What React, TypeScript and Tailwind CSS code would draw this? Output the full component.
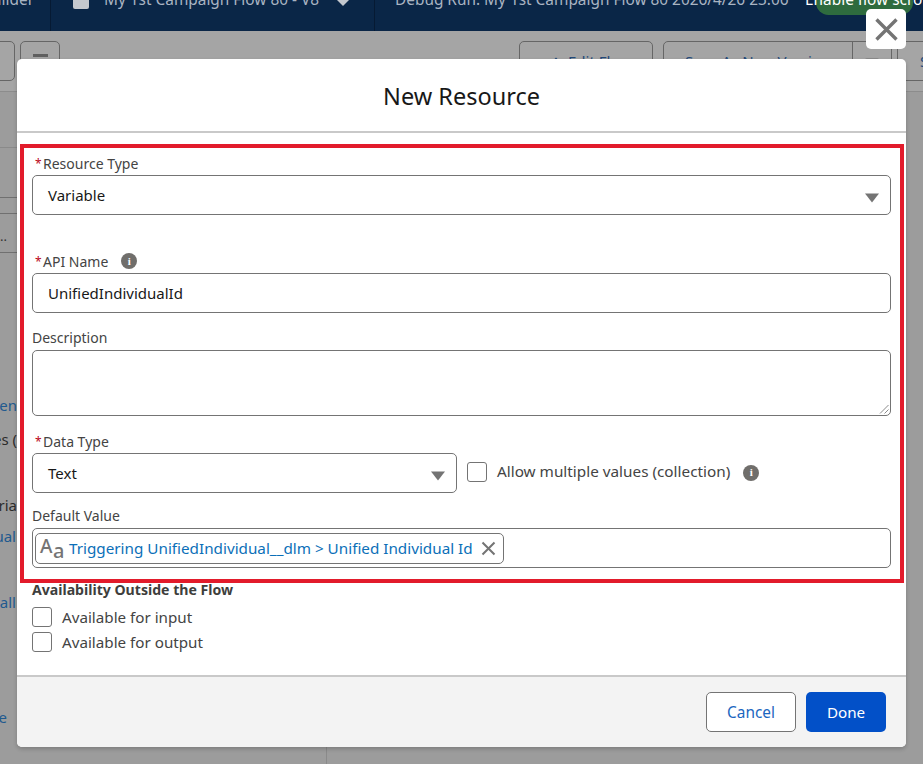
import type { ReactNode } from 'react';

const font = "font-['Noto_Sans','Open_Sans',sans-serif]";

function Label({ text, required = false }: { text: string; required?: boolean }) {
  return (
    <div className="flex h-[20px] items-center pt-[1px] text-[14px] leading-[20px] text-[#444444]">
      {required && <span className="ml-[3px] w-[8px] text-[12px] text-[#ba0517]">*</span>}
      {text}
    </div>
  );
}

function Box({ className = '', children }: { className?: string; children?: ReactNode }) {
  return (
    <div className={`flex items-center rounded-[5px] border border-[#747474] bg-white px-[15px] text-[15px] text-[#181818] ${className}`}>
      {children}
    </div>
  );
}

function Caret() {
  return (
    <svg viewBox="0 0 14 10" className="ml-auto mr-[-4px] mt-[6px] h-[10px] w-[14px]">
      <path d="M0 .5h14L7 9.5z" fill="#747474" />
    </svg>
  );
}

function Check() {
  return <span className="block h-[20px] w-[20px] shrink-0 rounded-[3px] border border-[#747474] bg-white" />;
}

function InfoDot() {
  return (
    <span className="flex h-[16px] w-[16px] items-center justify-center rounded-full bg-[#706e6b] font-['Liberation_Serif',serif] text-[11px] font-bold leading-none text-white">
      i
    </span>
  );
}

function Cross({ className = '' }: { className?: string }) {
  return (
    <svg viewBox="0 0 20 20" className={className} fill="none" stroke="#747474" strokeWidth="2.7">
      <path d="M2 2l16 16M18 2L2 18" />
    </svg>
  );
}

function SideText({ text, className }: { text: string; className: string }) {
  return (
    <div className={`flex h-[20px] justify-end whitespace-nowrap text-[15px] leading-[20px] ${className}`}>
      {text}
    </div>
  );
}

function TopBar() {
  return (
    <div className="flex h-[31px] shrink-0 bg-[#0a2647] text-[15.4px] leading-[20px] text-[#a9b4c2]">
      <div className="flex w-[51px] justify-end border-r border-[#061a33] pr-[16px]">
        <span className="-mt-[10px] whitespace-nowrap">Builder</span>
      </div>
      <div className="flex w-[324px] items-start border-r border-[#061a33] pl-[22px]">
        <span className="mr-[15px] block h-[9px] w-[16px] rounded-b-[2px] bg-[#c4c8ce]" />
        <span className="-mt-[10px] whitespace-nowrap">My 1st Campaign Flow 80 - V8</span>
        <svg viewBox="0 0 12 6" className="ml-[18px] h-[6px] w-[12px]">
          <path d="M0 0h12L6 6z" fill="#c4c8ce" />
        </svg>
      </div>
      <div className="relative flex-1 pl-[20px]">
        <span className="-mt-[10px] block whitespace-nowrap">Debug Run: My 1st Campaign Flow 80 2026/4/26 23:06</span>
        <span className="absolute left-[441px] top-[-10px] h-[25px] w-[97px] rounded-full bg-[#2e6b3e]" />
        <span className="absolute left-[430px] top-[-10px] whitespace-nowrap text-white">Enable flow scroll</span>
      </div>
    </div>
  );
}

function Toolbar() {
  return (
    <div className="flex h-[61px] shrink-0 items-start overflow-hidden border-b border-[#8c8c8c] bg-[#a5a5a5] pt-[10px] text-[15px] leading-[38px] text-[#23497a]">
      <div className="-ml-[20px] h-[40px] w-[35px] shrink-0 rounded-[5px] border border-[#666666]" />
      <div className="ml-[5px] flex h-[40px] w-[40px] shrink-0 justify-center rounded-[5px] border border-[#666666] pt-[12px]">
        <span className="h-[3px] w-[15px] bg-[#5f5f5f]" />
      </div>
      <div className="ml-[459px] flex h-[40px] w-[134px] shrink-0 rounded-[5px] border border-[#666666] pl-[30px]">
        <svg viewBox="0 0 10 10" className="mr-[8px] mt-[14px] h-[10px] w-[10px]">
          <path d="M0 10V7.5L6 1.5 8.5 4 2.5 10z" fill="#23497a" />
        </svg>
        <span className="whitespace-nowrap">Edit Flow</span>
      </div>
      <div className="ml-[10px] flex h-[40px] w-[229px] shrink-0 rounded-[5px] border border-[#666666]">
        <div className="w-[189px] whitespace-nowrap border-r border-[#666666] pl-[21px]">Save As New Version</div>
        <div className="flex flex-1 justify-center pt-[16px]">
          <span className="h-[8px] w-[14px] rounded-[2px] bg-[#8c8c8c]" />
        </div>
      </div>
      <div className="ml-[5px] h-[40px] w-[60px] shrink-0 whitespace-nowrap rounded-[5px] border border-[#666666] pl-[22px]">Save</div>
    </div>
  );
}

function Sidebar() {
  return (
    <div className="w-[327px] shrink-0 border-r border-[#8a8a8a] text-[#333333]">
      <div className="h-[56px] border-b border-[#8a8a8a]" />
      <div className="h-[50px] border-b border-[#707070]" />
      <div className="h-[16px] border-b border-[#707070]" />
      <div className="h-[39px] border-b border-[#707070] pt-[12px] text-[13px] leading-[20px]">..</div>
      <div className="mt-[142px] w-[17px]"><SideText text="Open" className="text-[#215a8f]" /></div>
      <div className="mt-[14px] w-[17px]"><SideText text="Variables (" className="text-[#2c2c2c]" /></div>
      <div className="mt-[46px] w-[17px]"><SideText text="Materia" className="text-[#2c2c2c]" /></div>
      <div className="mt-[11px] w-[16px]"><SideText text="Individual" className="text-[#215a8f]" /></div>
      <div className="mt-[46px] w-[16px]"><SideText text="View all" className="text-[#215a8f]" /></div>
      <div className="mt-[95px] w-[7px]"><SideText text="More" className="text-[#215a8f]" /></div>
    </div>
  );
}

function ResourceForm() {
  return (
    <div className="ml-[3px] w-[884px] border-[4px] border-[#e21b2b] pl-[8px] pr-[9px] pt-[5px]">
      <Label text="Resource Type" required />
      <Box className="mt-[2px] h-[40px]">Variable<Caret /></Box>
      <div className="mt-[36px] flex items-center">
        <Label text="API Name" required />
        <span className="ml-[13px]"><InfoDot /></span>
      </div>
      <Box className="mt-[2px] h-[40px]">UnifiedIndividualId</Box>
      <div className="mt-[14px]"><Label text="Description" /></div>
      <Box className="mt-[3px] h-[66px] !items-end justify-end !px-[1px] pb-[1px]">
        <svg viewBox="0 0 10 10" className="h-[10px] w-[10px]" fill="none" stroke="#8a8a8a" strokeWidth="1">
          <path d="M9.5 1L1 9.5M9.5 5.5L5.5 9.5" />
        </svg>
      </Box>
      <div className="mt-[15px]"><Label text="Data Type" required /></div>
      <div className="mt-[2px] flex items-center">
        <Box className="h-[40px] w-[425px]">Text<Caret /></Box>
        <span className="-mt-[2px] ml-[10px]"><Check /></span>
        <span className="-mt-[3px] ml-[10px] text-[15.3px] text-[#444444]">Allow multiple values (collection)</span>
        <span className="-mt-[1px] ml-[13px]"><InfoDot /></span>
      </div>
      <div className="mt-[12px]"><Label text="Default Value" /></div>
      <Box className="mb-[11px] mt-[3px] h-[40px] !px-[2px]">
        <div className="flex h-[31px] items-center rounded-[5px] border border-[#747474] pl-[3px] pr-[7px] text-[15.25px] text-[#0b6fb8]">
          <span className="relative mr-[7px] h-[24px] w-[23px] text-[#747474]">
            <span className="absolute left-[1px] top-[-2px] text-[19px] font-medium leading-[24px]">A</span>
            <span className="absolute left-[14px] top-[3px] text-[20px] font-medium leading-[24px]">a</span>
          </span>
          Triggering UnifiedIndividual__dlm &gt; Unified Individual Id
          <Cross className="ml-[8px] h-[15px] w-[15px]" />
        </div>
      </Box>
    </div>
  );
}

export default function App() {
  return (
    <div className={`relative h-[764px] w-[923px] overflow-hidden ${font}`}>
      <div className="flex h-full flex-col bg-[#9c9c9c]">
        <TopBar />
        <Toolbar />
        <div className="flex flex-1"><Sidebar /></div>
      </div>

      {/* dialog */}
      <div className="absolute left-[17px] top-[59px] flex h-[688px] w-[889px] flex-col overflow-hidden rounded-[5px] bg-white shadow-[0_2px_4px_rgba(0,0,0,0.2)]">
        <div className="flex h-[72px] shrink-0 items-center justify-center pt-[3px] text-[23.5px] text-[#181818]">
          New Resource
        </div>
        <div className="h-[2px] shrink-0 bg-[#c9c9c9]" />
        <div className="flex-1 pt-[11px]">
          <ResourceForm />
          <div className="px-[15px]">
            <div className="-mt-[3px] text-[14.1px] font-bold leading-[20px] text-[#3e3e3c]">Availability Outside the Flow</div>
            <div className="mt-[7px] flex h-[20px] items-center gap-[10px] text-[15.2px] text-[#444444]"><Check /><span className="mt-[1px]">Available for input</span></div>
            <div className="mt-[5px] flex h-[20px] items-center gap-[10px] text-[15.2px] text-[#444444]"><Check /><span className="mt-[1px]">Available for output</span></div>
          </div>
        </div>
        <div className="flex h-[72px] shrink-0 items-start justify-end gap-[10px] border-t-2 border-[#c9c9c9] bg-[#f3f3f3] pr-[20px] pt-[15px]">
          <button className="h-[40px] w-[90px] rounded-[5px] border border-[#747474] bg-white pt-[1px] text-[15.4px] text-[#1b66c0]">Cancel</button>
          <button className="h-[40px] w-[80px] rounded-[5px] bg-[#0250c8] text-[15.2px] text-white">Done</button>
        </div>
      </div>

      {/* close button */}
      <div className="absolute left-[866px] top-[9px] flex h-[40px] w-[40px] items-center justify-center rounded-[5px] bg-white">
        <Cross className="h-[25px] w-[25px]" />
      </div>
    </div>
  );
}
